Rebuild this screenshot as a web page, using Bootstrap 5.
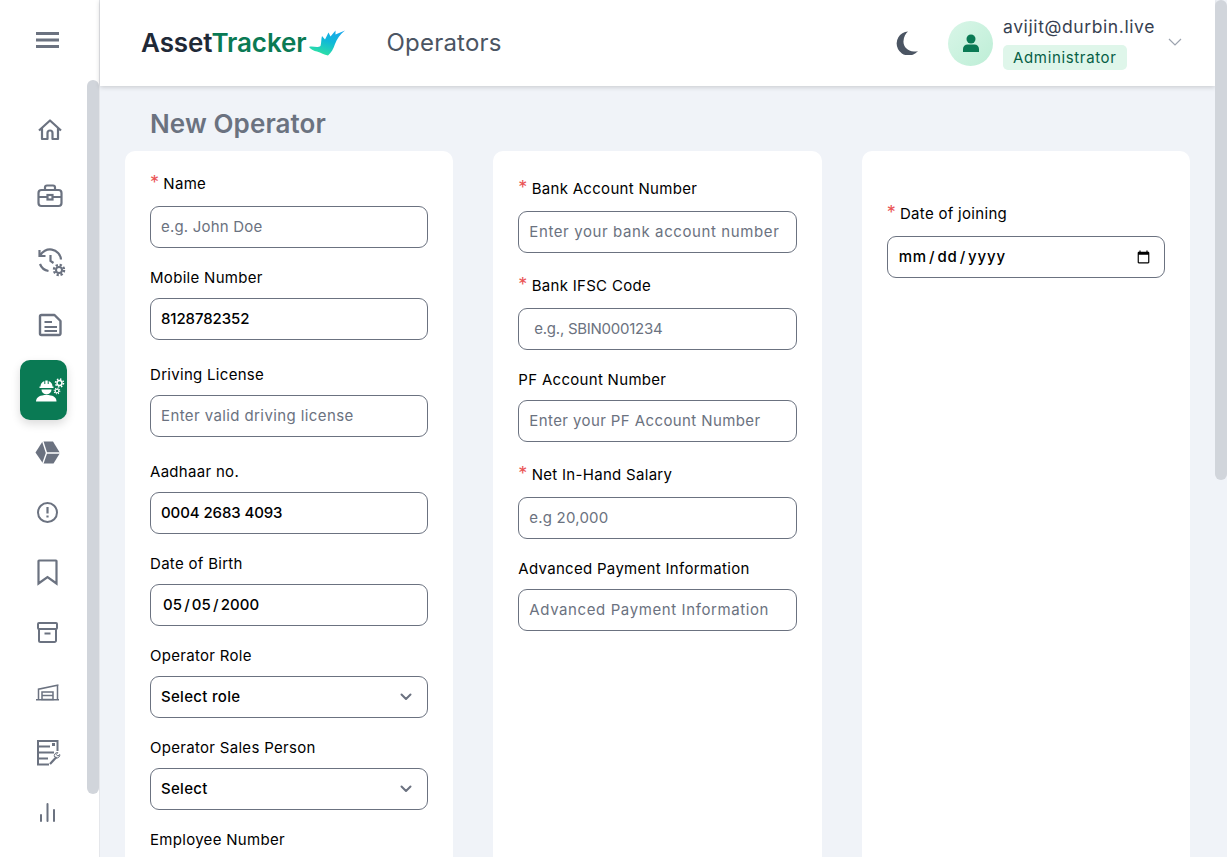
<!DOCTYPE html>
<html lang="en">
<head>
<meta charset="utf-8">
<title>New Operator</title>
<link href="https://cdn.jsdelivr.net/npm/bootstrap@5.3.0/dist/css/bootstrap.min.css" rel="stylesheet">
<style>
body{background:#f0f3f8;font-family:Inter,"Liberation Sans",sans-serif;font-size:15px;color:#000}
.shell{height:100vh;overflow:hidden;padding-right:12px;position:relative}
.thumb{position:absolute;width:12px;background:#d1d5db;border-radius:8px}
.thumb.page{right:0;top:0;height:480px}
.thumb.nav{left:87px;top:80px;height:714px}
.side{width:100px;height:100vh;background:#fff;border-right:1px solid #e5e7eb;flex:none;position:relative;overflow:hidden}
.side-top{height:80px;padding-left:36px}
.side-list{padding:20px 0 0 20px;width:87px}
.side-item{display:block;width:47px;height:60px;flex:none;border-radius:10px;color:#6b7280}
.side-item svg{display:block;overflow:visible}
.side-item.now{background:#0a7a54;color:#fff;box-shadow:0 4px 10px rgba(0,0,0,.14)}
.g6{margin-top:6px}.g3{margin-top:3px}.g5{margin-top:5px}.gm1{margin-top:-1px}
.top{height:86px;background:#fff;box-shadow:0 1px 5px rgba(0,0,0,.18);padding:0 33px 0 41px;position:relative}
.brand{font-size:26px;font-weight:600;color:#1f2937;letter-spacing:-.1px;line-height:1}
.brand b{font-weight:600;color:#0a7a54}
.top-title{font-size:24px;color:#4b5563;margin-left:42px;letter-spacing:.2px}
.moon{margin-right:30px}
.avatar{width:45px;height:45px;border-radius:50%;background:linear-gradient(135deg,#d9f6e8,#bdeed6);margin-right:10px}
.who{font-size:17.5px;color:#374151;line-height:24px;letter-spacing:.6px;margin-top:-2px}
.role-tag{display:inline-block;background:#dff6ea;color:#065f46;font-size:15px;line-height:25px;padding:0 10px;border-radius:5px;margin-top:6px;letter-spacing:.65px}
.chev{margin-left:13px;margin-bottom:2px}
.head-title{font-size:26px;font-weight:600;color:#6b7280;margin:0;padding:23px 0 12px 50px;line-height:30px;letter-spacing:.1px}
.cards{padding:0 25px;gap:40px;height:1379px}
.panel{background:#fff;border-radius:10px;padding:19px 25px 0;flex:1 1 0;min-width:0}
.panel.p2{padding-top:24px}
.panel.p3{padding-top:49px}
.fld{margin-bottom:19px}
.fld label{display:block;line-height:22px;margin-bottom:9px;font-size:15px;letter-spacing:.3px}
.fld label.req{padding:3px 0 2px}
.fld.wide{padding-top:5px}
.req i{color:#ea5455;font-style:normal;font-size:18px;line-height:0;margin-right:4px}
.form-control.inp,.form-select.inp{height:42px;border:1px solid #6b7280;border-radius:9px;font-size:15px;font-weight:500;padding:0 10px 2px;color:#000;box-shadow:none;letter-spacing:-.1px}
.form-select.inp{letter-spacing:.3px;padding-bottom:0}
.inp::placeholder{color:#6b7280;font-weight:400;opacity:1;letter-spacing:.4px}
.inp.ph-wide::placeholder{letter-spacing:.6px}
.inp.ph-tight::placeholder{letter-spacing:.2px}
.inp.ph-code::placeholder{letter-spacing:-.26px}
.form-control.inset{padding-left:15px}
.form-control.inp[type=date]{padding:0 11px;letter-spacing:.1px}
.form-control.inp.nopick[type=date]{padding-left:12px}
.form-control.blank[type=date]{letter-spacing:.85px}
.inp::-webkit-datetime-edit-text{padding:0 2px}
.form-select.inp{background-image:url("data:image/svg+xml,%3csvg xmlns='http://www.w3.org/2000/svg' viewBox='0 0 12 8'%3e%3cpath fill='none' stroke='%236b7280' stroke-width='2' stroke-linecap='round' stroke-linejoin='round' d='M1.5 1.5 6 6l4.5-4.5'/%3e%3c/svg%3e");background-size:12px 8px;background-position:right 15px center}
.nopick::-webkit-calendar-picker-indicator{display:none}
</style>
</head>
<body>
<div class="shell d-flex">
  <aside class="side">
    <div class="side-top d-flex align-items-center">
      <svg width="23" height="16" viewBox="0 0 23 16"><path d="M0 1.5h23M0 8h23M0 14.5h23" stroke="#6b7280" stroke-width="3"/></svg>
    </div>
    <nav class="side-list d-flex flex-column">
      <a class="side-item" href="#"><svg width="47" height="60" viewBox="20 100 47 60" fill="none" stroke="currentColor" stroke-width="2.2" stroke-linejoin="round"><path d="M39 130.5 50 120.5 61 130.5M42 128v11h5.5v-6a2.5 2.5 0 0 1 5 0v6H58v-11"/></svg></a>
      <a class="side-item g6" href="#"><svg width="47" height="60" viewBox="20 166 47 60" fill="none" stroke="currentColor" stroke-width="2.2"><rect x="38.500" y="190" width="23" height="16" rx="3"/><path d="M45 190v-2.500a2 2 0 0 1 2-2h6a2 2 0 0 1 2 2v2.500M38.500 197H47M53 197h8.500"/><rect x="47.500" y="195" width="5" height="4.500"/></svg></a>
      <a class="side-item g6" href="#"><svg width="47" height="60" viewBox="20 232 47 60" fill="none" stroke="currentColor" stroke-width="2.200"><path d="M39.500 250v6h6M40 256a11 11 0 0 1 21 3.500M40 264a11 11 0 0 0 8.500 7M50.500 255v6l3 2"/><circle cx="59" cy="270" r="3" stroke-width="2"/><circle cx="59" cy="270" r="5" stroke-width="2.500" stroke-dasharray="2.200 1.730"/></svg></a>
      <a class="side-item g3" href="#"><svg width="47" height="60" viewBox="20 295 47 60" fill="none" stroke="currentColor" stroke-width="2.400" stroke-linejoin="round"><path d="M41.500 315H54.500L60.500 321V333.500A1.500 1.500 0 0 1 59 335H41.500A1.500 1.500 0 0 1 40 333.500V316.500A1.500 1.500 0 0 1 41.500 315Z"/><path d="M44.500 322H52M44.500 327H57M44.500 331H57" stroke-width="2"/></svg></a>
      <a class="side-item now g5" href="#"><svg width="47" height="60" viewBox="20 360 47 60"><g fill="currentColor"><path d="M40.500 386.500a6 6 0 0 1 3.800-5.600v3h1v-3.400h2.400v3.400h1v-3a6 6 0 0 1 3.800 5.600h1v1.500H39.500v-1.500Z"/><path d="M41.500 389.500h10a5 5 0 0 1-10 0Z"/><path d="M36 401.500c0-4.500 4.500-6.500 10.500-6.500s10 2 10 6.500Z"/></g><circle cx="59.500" cy="383" r="2.500" fill="none" stroke="currentColor" stroke-width="1.500"/><circle cx="59.500" cy="383" r="4" fill="none" stroke="currentColor" stroke-width="1.500" stroke-dasharray="1.500 1.640"/><circle cx="57" cy="391" r="1.800" fill="none" stroke="currentColor" stroke-width="1.100"/><circle cx="57" cy="391" r="2.800" fill="none" stroke="currentColor" stroke-width="1.100" stroke-dasharray="1.100 1.100"/></svg></a>
      <a class="side-item g3" href="#"><svg width="47" height="60" viewBox="20 423 47 60"><path fill="currentColor" d="M35.500 452.500 42.500 441.500H53L60 453 53.500 463.500H43Z"/><path d="M42.500 440.500 46.500 453H61M46.500 453 42.500 464.500" stroke="#fff" stroke-width="1.400" fill="none"/></svg></a>
      <a class="side-item gm1" href="#"><svg width="47" height="60" viewBox="20 482 47 60" fill="none" stroke="currentColor" stroke-width="2"><circle cx="47.500" cy="512.500" r="9.500"/><path d="M47.500 507v6.500" stroke-width="2.200"/><path d="M47.500 515.500v2" stroke-width="2.200"/></svg></a>
      <a class="side-item" href="#"><svg width="47" height="60" viewBox="20 542 47 60" fill="none" stroke="currentColor" stroke-width="2.200"><path d="M38.500 561a.5.5 0 0 1 .5-.5H56a.5.5 0 0 1 .5.500V583.500L47.500 577 38.500 583.500Z"/></svg></a>
      <a class="side-item" href="#"><svg width="47" height="60" viewBox="20 602 47 60" fill="none" stroke="currentColor" stroke-width="2"><rect x="38" y="623" width="19" height="6" rx="1"/><path d="M39 629V640.500A1.500 1.500 0 0 0 40.500 642H54.500A1.500 1.500 0 0 0 56 640.500V629M44.500 633.500H50.500"/></svg></a>
      <a class="side-item" href="#"><svg width="47" height="60" viewBox="20 662 47 60" fill="none" stroke="currentColor" stroke-width="1.500"><path d="M36 699.800H59M38.500 699.800V689.200L58.500 685M57.500 685V699.800"/><rect x="42" y="692" width="11" height="7.500"/><path d="M42 695.500H53"/></svg></a>
      <a class="side-item" href="#"><svg width="47" height="60" viewBox="20 722 47 60" fill="none" stroke="currentColor" stroke-width="2"><path d="M57.500 751V741H38V764.500H49M38 746.500H50M38 752.500H54M38 758.500H48"/><rect x="52" y="743" width="3" height="3" fill="currentColor" stroke="none"/><path d="M50 764 56.500 757" stroke-width="2.200"/><path d="M55 757.500a3 3 0 0 0 4-.5 3 3 0 0 0 .8-2.500l-2 1.500-1.500-1.500 1.500-2a3.300 3.300 0 0 0-3.300 4.500" stroke-width="1"/></svg></a>
      <a class="side-item" href="#"><svg width="47" height="60" viewBox="20 782 47 60" fill="none" stroke="currentColor" stroke-width="2" stroke-linecap="round"><path d="M41 815V821M47.500 804V821M54 810V821"/></svg></a>
    </nav>
    <div class="thumb nav"></div>
  </aside>
  <div class="flex-grow-1 min-w-0">
    <header class="top d-flex align-items-center">
      <div class="brand">Asset<b>Tracker</b></div>
      <svg width="38" height="26" viewBox="0 0 38 26">
        <defs><linearGradient id="bird" x1=".8" y1="0" x2=".35" y2="1"><stop offset="0" stop-color="#1aa7ec"/><stop offset=".45" stop-color="#10b8d8"/><stop offset="1" stop-color="#2fe3a2"/></linearGradient></defs>
        <path fill="url(#bird)" d="M2 17C6 15.500 10 18.500 13.500 16 14.500 13 14 9 15 6L18 9.500 21.500 2.500 23.500 6.500 28.500 .5 28.500 4.500 38 .5C33 4 30 9 28 14 26.500 19 24 23 21 25.500 17 25 14 22.500 10 21.500 7 21 4 19.500 2 17Z"/>
      </svg>
      <div class="top-title">Operators</div>
      <svg class="moon ms-auto" width="23" height="24" viewBox="0 0 23 24"><path fill="#4b5563" d="M13 .5A12 12 0 1 0 23 20a11 11 0 0 1-4 .5C12 20.500 8 15 8.500 10 8.800 6 10.500 2.500 13 .5Z"/></svg>
      <div class="avatar d-flex align-items-center justify-content-center">
        <svg width="16" height="18" viewBox="0 0 16 18"><circle cx="8" cy="5" r="4.500" fill="#0a7a54"/><path fill="#0a7a54" d="M0 18v-3a4.500 4.500 0 0 1 4.500-4.500h7A4.500 4.500 0 0 1 16 15v3Z"/></svg>
      </div>
      <div>
        <div class="who">avijit@durbin.live</div>
        <span class="role-tag">Administrator</span>
      </div>
      <svg class="chev" width="14" height="8" viewBox="0 0 14 8"><path d="M1 1l6 6 6-6" fill="none" stroke="#9ca3af" stroke-width="1.200"/></svg>
    </header>
    <h1 class="head-title">New Operator</h1>
    <form class="cards d-flex">
      <section class="panel">
        <div class="fld"><label class="req"><i>*</i>Name</label><input class="form-control inp ph-tight" placeholder="e.g. John Doe"></div>
        <div class="fld"><label>Mobile Number</label><input class="form-control inp" value="8128782352"></div>
        <div class="fld wide"><label>Driving License</label><input class="form-control inp" placeholder="Enter valid driving license"></div>
        <div class="fld wide"><label>Aadhaar no.</label><input class="form-control inp" value="0004 2683 4093"></div>
        <div class="fld"><label>Date of Birth</label><input type="date" class="form-control inp nopick" value="2000-05-05"></div>
        <div class="fld"><label>Operator Role</label><select class="form-select inp"><option>Select role</option></select></div>
        <div class="fld"><label>Operator Sales Person</label><select class="form-select inp"><option>Select</option></select></div>
        <div class="fld"><label>Employee Number</label><input class="form-control inp"></div>
      </section>
      <section class="panel p2">
        <div class="fld"><label class="req"><i>*</i>Bank Account Number</label><input class="form-control inp ph-wide" placeholder="Enter your bank account number"></div>
        <div class="fld"><label class="req"><i>*</i>Bank IFSC Code</label><input class="form-control inp inset ph-code" placeholder="e.g., SBIN0001234"></div>
        <div class="fld"><label>PF Account Number</label><input class="form-control inp" placeholder="Enter your PF Account Number"></div>
        <div class="fld"><label class="req"><i>*</i>Net In-Hand Salary</label><input class="form-control inp ph-tight" placeholder="e.g 20,000"></div>
        <div class="fld"><label>Advanced Payment Information</label><input class="form-control inp ph-wide" placeholder="Advanced Payment Information"></div>
      </section>
      <section class="panel p3">
        <div class="fld"><label class="req"><i>*</i>Date of joining</label><input type="date" class="form-control inp blank"></div>
      </section>
    </form>
  </div>
  <div class="thumb page"></div>
</div>
</body>
</html>
